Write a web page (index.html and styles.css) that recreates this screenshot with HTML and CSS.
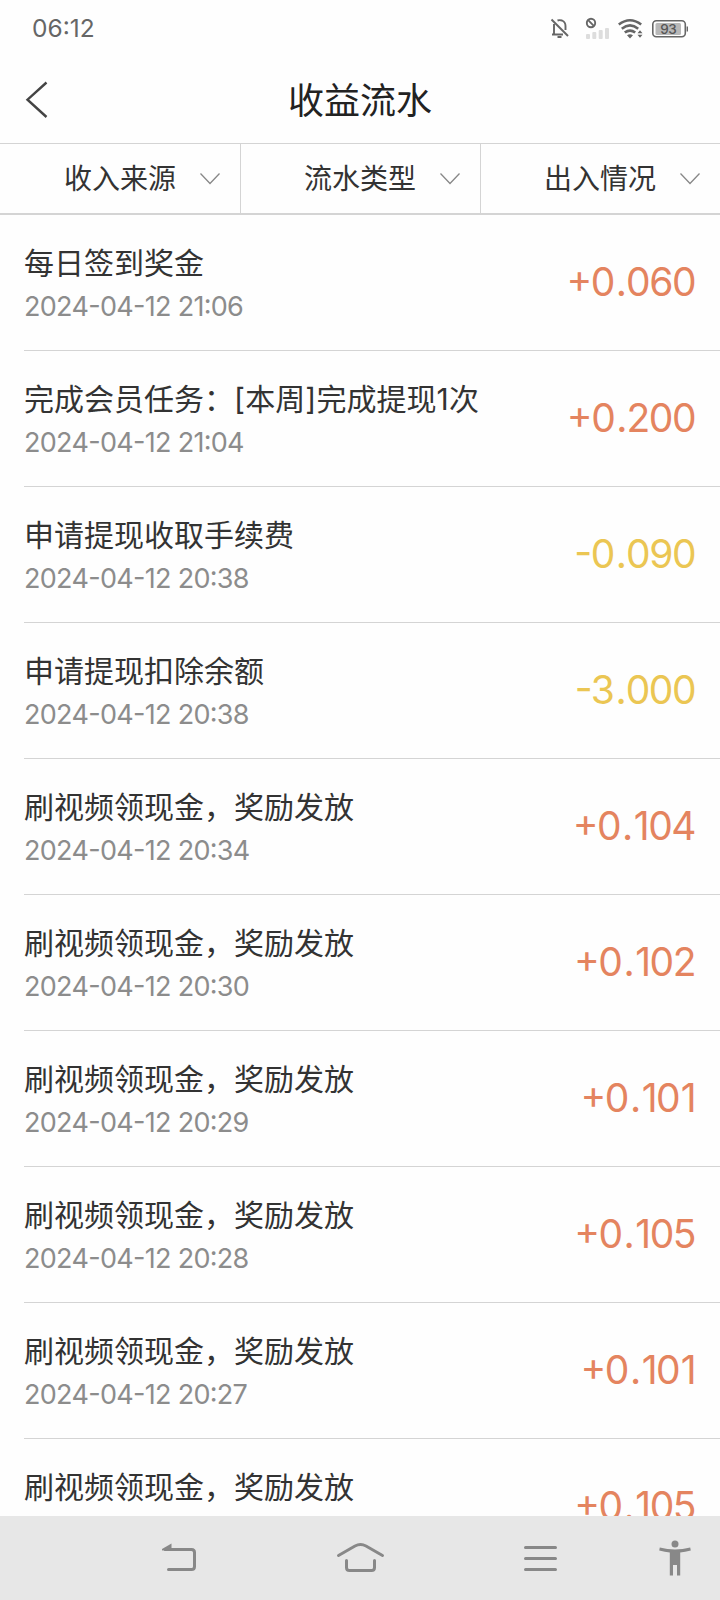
FILE: index.html
```
<!DOCTYPE html>
<html lang="zh-CN">
<head>
<meta charset="utf-8">
<title>收益流水</title>
<link rel="stylesheet" href="styles.css">
</head>
<body>
<div class="screen">
  <div class="status">
    <span class="clock">06:12</span>
    <svg class="status-icons" width="146" height="28" viewBox="544 14 146 28" fill="none">
      <g stroke="#666" stroke-width="1.9">
        <path d="M554 24v10.500M557.500 20.500Q559.500 19.800 562 20.500Q565.500 22 565.500 26v4M552 34.500h11"/>
        <path d="M551.500 19.500L568 36"/>
        <path d="M557.500 37h4" stroke-width="2"/>
        <circle cx="591" cy="23" r="4.200"/>
        <path d="M588.200 20.200L593.800 25.800"/>
      </g>
      <g fill="#ddd">
        <rect x="586" y="34" width="4" height="5" rx="1"/>
        <rect x="592.300" y="32" width="4" height="7" rx="1"/>
        <rect x="598.700" y="30" width="4" height="9" rx="1"/>
        <rect x="605" y="28" width="4" height="11" rx="1"/>
      </g>
      <g stroke="#666" stroke-width="2.600">
        <path d="M618.800 24.500Q630 16 641.200 24.500"/>
        <path d="M621.800 28.700Q630 22.200 638.200 28.700"/>
        <path d="M624.800 32.600Q630 28.500 635.200 32.600"/>
      </g>
      <path fill="#666" d="M627 35.200Q630 33.200 633 35.200L630 38.500ZM637.500 33.200l2.500-3 2.500 3ZM637.500 34.800h5l-2.500 3Z"/>
      <rect x="652.800" y="20.800" width="32.500" height="16" rx="3.500" stroke="#666" stroke-width="1.600"/>
      <rect x="655.500" y="23" width="25.500" height="12" rx="1.500" fill="#b8b8b8"/>
      <path d="M687.300 26.500v5" stroke="#666" stroke-width="1.400"/>
      <text x="660.300" y="34" class="battery" textLength="16.500">93</text>
    </svg>
  </div>
  <header class="titlebar">
    <svg class="back" width="24" height="38" viewBox="0 0 24 38"><path d="M21.500 2.500L2.500 19.700L21.500 37" fill="none" stroke="#444" stroke-width="2.400"/></svg>
    <h1>收益流水</h1>
  </header>
  <nav class="filters">
    <div class="filter"><span>收入来源</span><svg width="20" height="12" viewBox="0 0 20 12"><path d="M.5.500L10 10.500L19.500.500"/></svg></div>
    <div class="filter"><span>流水类型</span><svg width="20" height="12" viewBox="0 0 20 12"><path d="M.5.500L10 10.500L19.500.500"/></svg></div>
    <div class="filter"><span>出入情况</span><svg width="20" height="12" viewBox="0 0 20 12"><path d="M.5.500L10 10.500L19.500.500"/></svg></div>
  </nav>
  <main class="list">
    <div class="row"><div><div class="name">每日签到奖金</div><div class="date">2024-04-12 21:06</div></div><div class="amount">+0<i>.</i>060</div></div>
    <div class="row"><div><div class="name">完成会员任务：<span class="latin">[</span>本周<span class="latin">]</span>完成提现<span class="latin">1</span>次</div><div class="date">2024-04-12 21:04</div></div><div class="amount">+0<i>.</i>200</div></div>
    <div class="row"><div><div class="name">申请提现收取手续费</div><div class="date">2024-04-12 20:38</div></div><div class="amount out">-0<i>.</i>090</div></div>
    <div class="row"><div><div class="name">申请提现扣除余额</div><div class="date">2024-04-12 20:38</div></div><div class="amount out">-3<i>.</i>000</div></div>
    <div class="row"><div><div class="name">刷视频领现金，奖励发放</div><div class="date">2024-04-12 20:34</div></div><div class="amount">+0<i>.</i><b>1</b>04</div></div>
    <div class="row"><div><div class="name">刷视频领现金，奖励发放</div><div class="date">2024-04-12 20:30</div></div><div class="amount">+0<i>.</i><b>1</b>02</div></div>
    <div class="row"><div><div class="name">刷视频领现金，奖励发放</div><div class="date">2024-04-12 20:29</div></div><div class="amount">+0<i>.</i><b>1</b>0<b>1</b></div></div>
    <div class="row"><div><div class="name">刷视频领现金，奖励发放</div><div class="date">2024-04-12 20:28</div></div><div class="amount">+0<i>.</i><b>1</b>05</div></div>
    <div class="row"><div><div class="name">刷视频领现金，奖励发放</div><div class="date">2024-04-12 20:27</div></div><div class="amount">+0<i>.</i><b>1</b>0<b>1</b></div></div>
    <div class="row last"><div><div class="name">刷视频领现金，奖励发放</div></div><div class="amount">+0<i>.</i><b>1</b>05</div></div>
  </main>
  <footer class="navbar">
    <svg width="720" height="84" viewBox="0 1516 720 84" fill="none" stroke="#888" stroke-width="3" stroke-linecap="round">
      <path d="M165 1549.500H191.500Q194.500 1549.500 194.500 1552.500V1566.500Q194.500 1569.500 191.500 1569.500H168.500"/>
      <path d="M162 1550.500V1549L171.500 1543.500V1549.500Z" fill="#888" stroke="none"/>
      <path d="M338.500 1555.500L355 1546Q360.500 1543 366 1546L382.500 1555.500M346.500 1560.500V1567.500Q346.500 1570.500 349.500 1570.500H371.500Q374.500 1570.500 374.500 1567.500V1560.500"/>
      <path d="M525.500 1547.500H555.500M525.500 1558.500H555.500M525.500 1569.500H555.500"/>
      <g fill="#888" stroke="none"><circle cx="675" cy="1544" r="3.500"/><path d="M659.800 1547.500Q675 1551.500 690.200 1547.500L690.800 1550.500Q685 1552.200 680.200 1552.500V1575.500H677V1565H673V1575.500H669.800V1552.500Q665 1552.200 659.200 1550.500Z"/></g>
    </svg>
  </footer>
</div>
</body>
</html>
```
FILE: styles.css
```
* { box-sizing: border-box; }
body { margin: 0; background: #fefefe; font-family: "Noto Sans CJK SC", sans-serif; color: #333; }
.screen { width: 720px; height: 1600px; display: flex; flex-direction: column; overflow: hidden; }
.status { height: 56px; flex: none; display: flex; justify-content: space-between; align-items: center; padding: 0 30px 0 32px; }
.clock { font: 24.500px/55px Inter, sans-serif; color: #666; letter-spacing: 0; font-feature-settings: "case"; }
.battery { font: 500 13.500px Inter, sans-serif; fill: #555; }
.titlebar { height: 87px; flex: none; display: grid; grid-template-columns: 1fr auto 1fr; align-items: center; padding: 0 25px 2px; }
.titlebar h1 { margin: 0; font-size: 36px; line-height: 85px; font-weight: 400; color: #222; }
.filters { height: 72px; flex: none; display: grid; grid-template-columns: repeat(3, 240px); border-top: 1px solid #d4d4d4; border-bottom: 2px solid #d4d4d4; }
.filter { display: flex; justify-content: flex-end; align-items: center; gap: 24px; padding-right: 20px; font-size: 28px; }
.filter span { line-height: 65px; padding-bottom: 3px; }
.filter + .filter { border-left: 1px solid #d4d4d4; }
.filter path { fill: none; stroke: #888; stroke-width: 1.300; }
.list { flex: 1; min-height: 0; overflow: hidden; padding-left: 24px; }
.row { height: 136px; display: flex; justify-content: space-between; align-items: flex-start; padding: 24px 24px 0 0; border-bottom: 1px solid #d4d4d4; }
.name { height: 44px; font-size: 30px; line-height: 44px; white-space: nowrap; }
.latin { font-family: Inter, sans-serif; letter-spacing: .3px; line-height: 1; }
.date { font: 27px/40px Inter, sans-serif; color: #8c8c8c; letter-spacing: -.7px; padding-top: 4px; white-space: nowrap; font-feature-settings: "case"; }
.amount { font: 39px/80px Inter, sans-serif; color: #e4845f; letter-spacing: -1.500px; padding: 3px 1px 0 0; font-feature-settings: "case"; }
.amount i { font-style: normal; padding: 0 .5px 0 2px; }
.amount b { font-weight: 400; padding-left: 1.500px; }
.out { color: #ebc653; }
.navbar { height: 84px; flex: none; background: #e7e7e7; }
.navbar svg { display: block; }
```
